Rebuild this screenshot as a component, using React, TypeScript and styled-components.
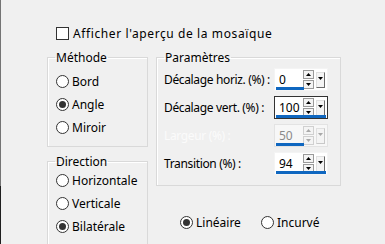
import React from "react";
import styled, { createGlobalStyle } from "styled-components";

const GlobalStyle = createGlobalStyle`
  html, body {
    margin: 0;
    padding: 0;
    background: #f0f0f0;
  }
  body {
    font-family: "Noto Sans", "Open Sans", Arial, sans-serif;
    font-size: 12px;
    color: #000;
  }
`;

const params = [
  { label: "Décalage horiz. (%) :", value: "0" },
  { label: "Décalage vert. (%) :", value: "100", focused: true, full: true },
  { label: "Largeur (%) :", value: "50", disabled: true },
  { label: "Transition (%) :", value: "94", full: true },
];

function Radio({ label, checked }: { label: string; checked?: boolean }) {
  return (
    <RadioRow>
      <RadioDot $checked={checked} />
      <span>{label}</span>
    </RadioRow>
  );
}

function Arrow({ up, disabled }: { up?: boolean; disabled?: boolean }) {
  return (
    <svg width="5" height="3" viewBox="0 0 5 3">
      <path
        d={up ? "M2.5 0 L5 3 L0 3 Z" : "M0 0 L5 0 L2.5 3 Z"}
        fill={disabled ? "#a8a8a8" : "#000"}
      />
    </svg>
  );
}

function Spin({
  value,
  focused,
  full,
  disabled,
}: {
  value: string;
  focused?: boolean;
  full?: boolean;
  disabled?: boolean;
}) {
  return (
    <SpinBox $focused={focused} $disabled={disabled}>
      <SpinValue $disabled={disabled}>{value}</SpinValue>
      <Steppers>
        <StepButton $disabled={disabled}>
          <Arrow up disabled={disabled} />
        </StepButton>
        <StepButton $disabled={disabled}>
          <Arrow disabled={disabled} />
        </StepButton>
      </Steppers>
      <DropButton $disabled={disabled}>
        <Arrow disabled={disabled} />
      </DropButton>
      <Underline $full={full} />
    </SpinBox>
  );
}

export default function App() {
  return (
    <Dialog>
      <GlobalStyle />
      <CheckRow>
        <CheckBox />
        <CheckLabel>Afficher l'aperçu de la mosaïque</CheckLabel>
      </CheckRow>
      <Columns>
        <LeftColumn>
          <Group $height={97}>
            <legend>Méthode</legend>
            <RadioList $top={9}>
              <Radio label="Bord" />
              <Radio label="Angle" checked />
              <Radio label="Miroir" />
            </RadioList>
          </Group>
          <Group $height={110}>
            <legend>Direction</legend>
            <RadioList $top={4}>
              <Radio label="Horizontale" />
              <Radio label="Verticale" />
              <Radio label="Bilatérale" checked />
            </RadioList>
          </Group>
        </LeftColumn>
        <RightColumn>
          <Group $height={136}>
            <legend>Paramètres</legend>
            <ParamList>
              {params.map((p, i) => (
                <ParamRow key={i}>
                  <ParamLabel $disabled={p.disabled}>{p.label}</ParamLabel>
                  <Spin
                    value={p.value}
                    focused={p.focused}
                    full={p.full}
                    disabled={p.disabled}
                  />
                </ParamRow>
              ))}
            </ParamList>
          </Group>
          <CurveRow>
            <Radio label="Linéaire" checked />
            <Radio label="Incurvé" />
          </CurveRow>
        </RightColumn>
      </Columns>
    </Dialog>
  );
}

const Dialog = styled.div`
  width: 385px;
  height: 244px;
  box-sizing: border-box;
  overflow: hidden;
  padding: 26px 0 0 47px;
  background:
    linear-gradient(to bottom, #747474 0 186px, #1e1e1e 186px) left top / 1px 100% no-repeat,
    #f0f0f0;
`;

const CheckRow = styled.div`
  display: flex;
  align-items: center;
  gap: 4px;
  height: 14px;
  margin-left: 9px;
`;

const CheckBox = styled.span`
  width: 11px;
  height: 11px;
  border: 1px solid #333;
  background: #fff;
`;

const CheckLabel = styled.span`
  letter-spacing: 0.6px;
`;

const Columns = styled.div`
  display: flex;
  gap: 8px;
  margin-top: 10px;
`;

const LeftColumn = styled.div`
  display: flex;
  flex-direction: column;
  gap: 7px;
  width: 101px;
`;

const RightColumn = styled.div`
  display: flex;
  flex-direction: column;
  width: 185px;
`;

const Group = styled.fieldset<{ $height: number }>`
  box-sizing: border-box;
  height: ${(p) => p.$height}px;
  margin: 0;
  padding: 0 0 0 7px;
  border: 1px solid #d9d9d9;
  box-shadow: inset 1px 1px 0 #fff;
  min-width: 0;

  legend {
    padding: 0 1px;
    margin-left: 0;
    line-height: 15px;
  }
`;

const RadioList = styled.div<{ $top: number }>`
  display: flex;
  flex-direction: column;
  gap: 8px;
  margin-top: ${(p) => p.$top}px;
  margin-left: 1px;
`;

const RadioRow = styled.div`
  display: flex;
  align-items: center;
  gap: 3px;
  height: 15px;
  white-space: nowrap;
`;

const RadioDot = styled.span<{ $checked?: boolean }>`
  position: relative;
  flex: none;
  width: 11px;
  height: 11px;
  border: 1px solid #333;
  border-radius: 50%;
  background: #fff;

  &::after {
    content: "";
    display: ${(p) => (p.$checked ? "block" : "none")};
    position: absolute;
    left: 2px;
    top: 2px;
    width: 7px;
    height: 7px;
    border-radius: 50%;
    background: #333;
  }
`;

const ParamList = styled.div`
  display: flex;
  flex-direction: column;
  gap: 5px;
  margin-top: 3px;
`;

const ParamRow = styled.div`
  display: grid;
  grid-template-columns: 110px 54px;
  align-items: center;
`;

const ParamLabel = styled.span<{ $disabled?: boolean }>`
  white-space: nowrap;
  letter-spacing: -0.35px;
  color: ${(p) => (p.$disabled ? "#fbfbfb" : "#000")};
`;

const SpinBox = styled.div<{ $focused?: boolean; $disabled?: boolean }>`
  position: relative;
  display: flex;
  align-items: center;
  box-sizing: border-box;
  height: 23px;
  padding: 0 2px 0 4px;
  background: ${(p) => (p.$disabled ? "#f7f7f7" : "#fff")};
  border: 1px solid
    ${(p) => (p.$focused ? "#333" : p.$disabled ? "#e3e3e3" : "#f4f4f4")};
`;

const SpinValue = styled.span<{ $disabled?: boolean }>`
  flex: 1;
  color: ${(p) => (p.$disabled ? "#8a8a8a" : "#000")};
`;

const Steppers = styled.div`
  display: flex;
  flex-direction: column;
  gap: 1px;
  margin-right: 2px;
`;

const StepButton = styled.span<{ $disabled?: boolean }>`
  display: flex;
  align-items: center;
  justify-content: center;
  width: 9px;
  height: 7px;
  background: #f4f4f4;
  border: 1px solid ${(p) => (p.$disabled ? "#d0d0d0" : "#9a9a9a")};
`;

const DropButton = styled.span<{ $disabled?: boolean }>`
  display: flex;
  justify-content: center;
  padding-top: 4px;
  box-sizing: border-box;
  width: 9px;
  height: 16px;
  background: #f4f4f4;
  border: 1px solid #e0e0e0;
  border-right-color: ${(p) => (p.$disabled ? "#c8c8c8" : "#6a6a6a")};
  border-bottom-color: ${(p) => (p.$disabled ? "#c8c8c8" : "#6a6a6a")};
`;

const Underline = styled.span<{ $full?: boolean }>`
  position: absolute;
  left: 1px;
  bottom: 0;
  width: ${(p) => (p.$full ? "calc(100% - 2px)" : "28px")};
  height: 3px;
  background: #0f67c0;
`;

const CurveRow = styled.div`
  display: grid;
  grid-template-columns: 81px auto;
  margin: 29px 0 0 24px;
`;
